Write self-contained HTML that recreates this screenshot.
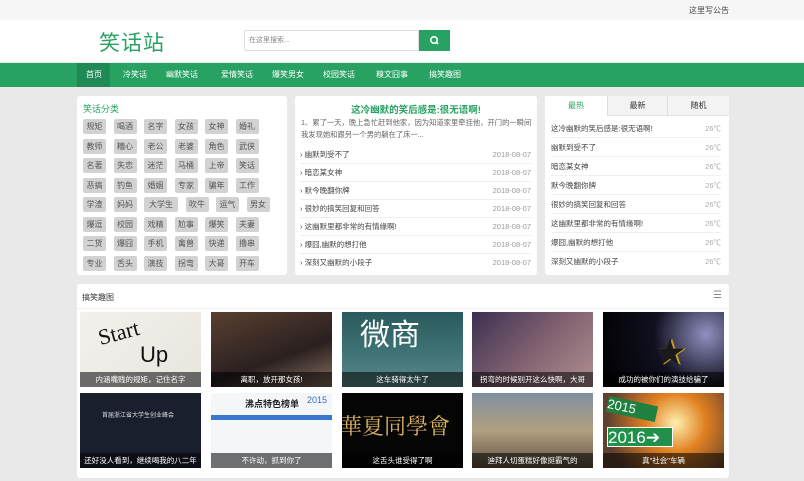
<!DOCTYPE html>
<html><head><meta charset="utf-8"><style>
*{margin:0;padding:0;box-sizing:border-box}
body{width:804px;height:481px;overflow:hidden;background:#e9e9e9;font-family:"Liberation Sans","Noto Sans CJK SC",sans-serif;font-size:8px;color:#333;position:relative}
.a{position:absolute}
.top{left:0;top:0;width:804px;height:20px;background:#f6f6f6}
.hdr{left:0;top:20px;width:804px;height:42px;background:#fff}
.nav{left:0;top:63px;width:804px;height:24px;background:#27a262}
.nav span{position:absolute;top:0;height:24px;line-height:24px;color:#fff;font-size:8px}
.panel{background:#fff;border-radius:3px}
.tag{position:absolute;height:15px;line-height:15px;background:#d2d2d2;color:#555;font-size:8px;text-align:center;border-radius:2px}
.row{position:absolute;left:5px;right:6px;height:18px;line-height:18px;border-bottom:1px solid #eee;font-size:7.5px;color:#444}
.row b{font-weight:normal;color:#999;position:absolute;right:0}
.r2{position:absolute;left:6px;right:8px;height:19px;line-height:19px;border-bottom:1px solid #f0f0f0;font-size:7.5px;color:#444}
.r2 b{font-weight:normal;color:#aaa;position:absolute;right:0}
.img{position:absolute;width:121px;height:75px;overflow:hidden}
.img i{position:absolute;left:0;bottom:0;width:100%;height:15px;line-height:15px;background:rgba(0,0,0,.55);color:#fff;font-style:normal;text-align:center;font-size:7.5px}
</style></head><body>
<div class="a top"><span class="a" style="left:689px;top:5px;font-size:8px;color:#444">这里写公告</span></div>
<div class="a hdr">
<span class="a" style="left:99px;top:7px;font-size:21px;color:#27a262;letter-spacing:1px">笑话站</span>
<div class="a" style="left:244px;top:10px;width:175px;height:21px;border:1px solid #ddd;border-radius:2px;font-size:7px;color:#888;line-height:19px;padding-left:4px">在这里搜索...</div>
<div class="a" style="left:419px;top:10px;width:31px;height:21px;background:#27a262">
<svg width="31" height="21"><circle cx="15" cy="10" r="3.2" fill="none" stroke="#fff" stroke-width="1.6"/><line x1="17.3" y1="12.3" x2="19" y2="14" stroke="#fff" stroke-width="1.6"/></svg></div>
</div>
<div class="a nav">
<div class="a" style="left:77px;top:0;width:33px;height:24px;background:#208a56"></div>
<span style="left:86px">首页</span><span style="left:123px">冷笑话</span><span style="left:166px">幽默笑话</span><span style="left:221px">爱情笑话</span><span style="left:272px">爆笑男女</span><span style="left:323px">校园笑话</span><span style="left:376px">糗文囧事</span><span style="left:429px">搞笑趣图</span>
</div>

<div class="a panel" style="left:77px;top:96px;width:210px;height:179px">
<span class="a" style="left:6px;top:6px;font-size:9px;color:#27a262">笑话分类</span>
<div id="tags"></div>
</div>

<div class="a panel" style="left:295px;top:96px;width:242px;height:179px">
<div class="a" style="left:0;top:6px;width:242px;text-align:center;font-size:9.5px;font-weight:bold;color:#27a262">这冷幽默的笑后感是:很无语啊!</div>
<div class="a" style="left:6px;top:21px;width:232px;font-size:7.3px;line-height:12px;color:#666">1、累了一天，晚上急忙赶到他家，因为知道家里牵挂他，开门的一瞬间我发现她和跟另一个男的躺在了床一...</div>
<div class="row" style="top:50px">› 幽默到受不了<b>2018-08-07</b></div>
<div class="row" style="top:68px">› 暗恋某女神<b>2018-08-07</b></div>
<div class="row" style="top:86px">› 默今晚翻你牌<b>2018-08-07</b></div>
<div class="row" style="top:104px">› 很妙的搞笑回复和回答<b>2018-08-07</b></div>
<div class="row" style="top:122px">› 这幽默里都非常的有情缘啊!<b>2018-08-07</b></div>
<div class="row" style="top:140px">› 爆囧,幽默的想打他<b>2018-08-07</b></div>
<div class="row" style="top:158px;border:0">› 深刻又幽默的小段子<b>2018-08-07</b></div>
</div>

<div class="a panel" style="left:545px;top:96px;width:184px;height:179px">
<div class="a" style="left:0;top:0;width:184px;height:20px;background:#f3f3f3;border-bottom:1px solid #e5e5e5"></div>
<div class="a" style="left:0;top:0;width:62px;height:21px;background:#fff;text-align:center;line-height:20px;color:#27a262;font-size:8px">最热</div>
<div class="a" style="left:62px;top:0;width:60px;height:20px;text-align:center;line-height:20px;border-left:1px solid #ddd;font-size:8px">最新</div>
<div class="a" style="left:122px;top:0;width:62px;height:20px;text-align:center;line-height:20px;border-left:1px solid #ddd;font-size:8px">随机</div>
<div class="r2" style="top:23px">这冷幽默的笑后感是:很无语啊!<b>26℃</b></div>
<div class="r2" style="top:42px">幽默到受不了<b>26℃</b></div>
<div class="r2" style="top:61px">暗恋某女神<b>26℃</b></div>
<div class="r2" style="top:80px">默今晚翻你牌<b>26℃</b></div>
<div class="r2" style="top:99px">很妙的搞笑回复和回答<b>26℃</b></div>
<div class="r2" style="top:118px">这幽默里都非常的有情缘啊!<b>26℃</b></div>
<div class="r2" style="top:137px">爆囧,幽默的想打他<b>26℃</b></div>
<div class="r2" style="top:156px;border:0">深刻又幽默的小段子<b>26℃</b></div>
</div>

<div class="a panel" style="left:77px;top:284px;width:652px;height:194px">
<div class="a" style="left:0;top:0;width:652px;height:25px;border-bottom:1px solid #eee"></div>
<span class="a" style="left:5px;top:8px;font-size:8px;color:#333">搞笑趣图</span>
<span class="a" style="right:7px;top:6px;font-size:10px;color:#888">☰</span>
</div>
<div class="img" style="left:80px;top:312px;background:linear-gradient(135deg,#f4f1ec,#e8e4de)"><span class="a" style="left:18px;top:8px;font-size:22px;color:#111;transform:rotate(-15deg);font-family:'Liberation Serif'">Start</span><span class="a" style="left:60px;top:30px;font-size:22px;color:#111">Up</span><i>内涵嘴贱的规矩，记住名字</i></div>
<div class="img" style="left:211px;top:312px;background:linear-gradient(160deg,#5a4030,#2a2020 60%,#8a7060)"><i>离职，放开那女孩!</i></div>
<div class="img" style="left:342px;top:312px;background:linear-gradient(180deg,#2a5a5c,#3d7173 50%,#5a8a8c)"><span class="a" style="left:18px;top:-2px;font-size:30px;color:#fff">微商</span><i>这车骑得太牛了</i></div>
<div class="img" style="left:472px;top:312px;background:linear-gradient(135deg,#3a3050,#806070 50%,#b09090)"><i>拐弯的时候别开这么快啊，大哥</i></div>
<div class="img" style="left:603px;top:312px;background:radial-gradient(circle at 85% 30%,#9090c0,#101020 45%,#000)"><span class="a" style="left:52px;top:16px;font-size:30px;color:#1a1a1a;text-shadow:2px 0 #c8a020">★</span><i>成功的被你们的演技给骗了</i></div>
<div class="img" style="left:80px;top:393px;background:#1a1f2e"><span class="a" style="left:22px;top:17px;font-size:6px;color:#ddd">首届浙江省大学生创业峰会</span><i>还好没人看到，继续喝我的八二年</i></div>
<div class="img" style="left:211px;top:393px;background:#f4f6fa"><span class="a" style="left:34px;top:4px;font-size:9px;color:#222;font-weight:bold">沸点特色榜单</span><span class="a" style="left:96px;top:2px;font-size:9px;color:#3070c0">2015</span><div class="a" style="left:0;top:22px;width:121px;height:5px;background:#3a78d0"></div><i>不许动，抓到你了</i></div>
<div class="img" style="left:342px;top:393px;background:#050505"><span class="a" style="left:-2px;top:17px;font-size:22px;color:#d8b060;font-family:'Noto Serif CJK SC',serif">華夏同學會</span><i>这舌头谁受得了啊</i></div>
<div class="img" style="left:472px;top:393px;background:linear-gradient(180deg,#8090a0,#b0a080 50%,#605040)"><i>迪拜人切蛋糕好像挺霸气的</i></div>
<div class="img" style="left:603px;top:393px;background:radial-gradient(circle at 60% 40%,#fff0b0,#e08020 35%,#604030 80%)"><div class="a" style="left:4px;top:8px;width:50px;height:16px;background:#208040;color:#fff;font-size:13px;line-height:16px;transform:rotate(12deg)">2015</div><div class="a" style="left:4px;top:34px;width:66px;height:20px;background:#20904a;color:#fff;font-size:17px;line-height:20px;border:1px solid #fff">2016➔</div><i>真"社会"车辆</i></div>

<script>
var t=[["规矩","喝酒","名字","女孩","女神","婚礼"],["教师","糟心","老公","老婆","角色","武侠"],["名著","失恋","迷茫","马桶","上帝","笑话"],["恶搞","钓鱼","婚姻","专家","骗年","工作"],["学渣","妈妈","大学生","吹牛","运气","男女"],["爆逗","校园","戏精","尬事","爆笑","夫妻"],["二货","爆囧","手机","禽兽","快递","撸串"],["专业","舌头","演技","拐弯","大哥","开车"]];
var h="";t.forEach(function(r,i){var x=6;r.forEach(function(w){var wd=w.length>2?34:23;h+='<div class="tag" style="left:'+x+'px;top:'+(23+i*19.5)+'px;width:'+wd+'px">'+w+'</div>';x+=wd+7.5;});});
document.getElementById("tags").innerHTML=h;
</script>
</body></html>
